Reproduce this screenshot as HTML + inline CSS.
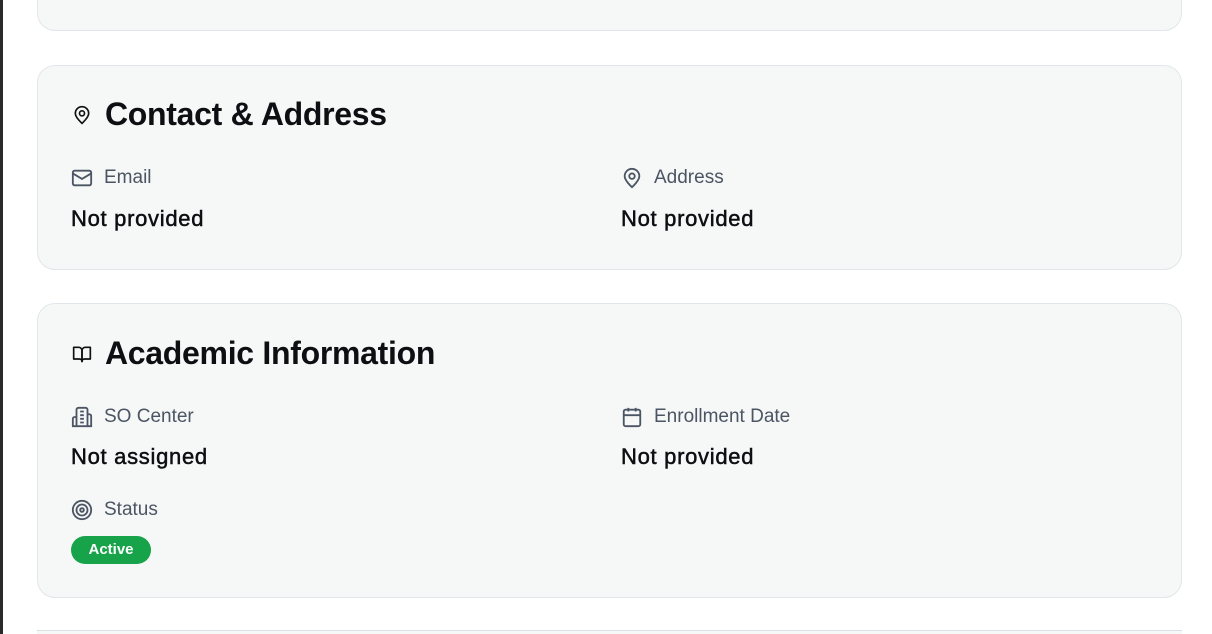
<!DOCTYPE html>
<html><head><style>
*{margin:0;padding:0;box-sizing:border-box}
body{width:1212px;height:634px;background:#fff;font-family:"Liberation Sans",sans-serif;position:relative;overflow:hidden}
.lb{position:absolute;left:0;top:0;width:3px;height:634px;background:#2a2a2a}
.card{position:absolute;left:37px;width:1145px;background:#f6f7f7;border:1px solid #e1e6ea;border-radius:18px}
.t{position:absolute;left:67px;font-size:32px;font-weight:bold;color:#0d0f12;letter-spacing:-0.3px;display:flex;align-items:center}
.t svg{margin-right:13px}
.l{position:absolute;font-size:19px;color:#4b5563;display:flex;align-items:center}
.l svg{margin-right:11px}
.v{position:absolute;font-size:22px;color:#0d0f12;letter-spacing:0.7px;-webkit-text-stroke:0.5px #0d0f12}
.badge{position:absolute;left:71px;top:536px;width:80px;height:28px;border-radius:14px;background:#16a34a;color:#fff;font-weight:bold;font-size:15px;text-align:center;line-height:28px}
</style></head><body>
<div class="lb"></div>
<div class="card" style="top:-20px;height:51px"></div>
<div class="card" style="top:65px;height:205px"></div>
<div class="card" style="top:303px;height:295px"></div>
<div style="position:absolute;left:37px;top:630px;width:1145px;height:4px;border-top:1px solid #d8e0e4;background:#f6f7f7"></div>

<div class="t" style="top:96px;left:72px"><svg width="20" height="20" viewBox="0 0 24 24" fill="none" stroke="#111" stroke-width="2" stroke-linecap="round"><path d="M20 10c0 5-8 12-8 12s-8-7-8-12a8 8 0 0 1 16 0z"/><circle cx="12" cy="10" r="3"/></svg>Contact &amp; Address</div>
<div class="l" style="left:71px;top:167px"><svg width="22" height="22" viewBox="0 0 24 24" fill="none" stroke="#4b5563" stroke-width="2"><rect x="2" y="4" width="20" height="16" rx="2"/><path d="M22 7l-10 6L2 7"/></svg>Email</div>
<div class="v" style="left:71px;top:206px">Not provided</div>
<div class="l" style="left:621px;top:167px"><svg width="22" height="22" viewBox="0 0 24 24" fill="none" stroke="#4b5563" stroke-width="2"><path d="M20 10c0 5-8 12-8 12s-8-7-8-12a8 8 0 0 1 16 0z"/><circle cx="12" cy="10" r="3"/></svg>Address</div>
<div class="v" style="left:621px;top:206px">Not provided</div>

<div class="t" style="top:335px;left:72px"><svg width="20" height="20" viewBox="0 0 24 24" fill="none" stroke="#111" stroke-width="2" stroke-linejoin="round"><path d="M2 4h6a4 4 0 0 1 4 4v13a3 3 0 0 0-3-3H2z"/><path d="M22 4h-6a4 4 0 0 0-4 4v13a3 3 0 0 1 3-3h7z"/></svg>Academic Information</div>
<div class="l" style="left:71px;top:406px"><svg width="22" height="22" viewBox="0 0 24 24" fill="none" stroke="#4b5563" stroke-width="2"><path d="M6 22V4a2 2 0 0 1 2-2h8a2 2 0 0 1 2 2v18z"/><path d="M6 12H4a2 2 0 0 0-2 2v8h4M18 9h2a2 2 0 0 1 2 2v11h-4M10 6h4M10 10h4M10 14h4M10 18h4"/></svg>SO Center</div>
<div class="v" style="left:71px;top:444px">Not assigned</div>
<div class="l" style="left:621px;top:406px"><svg width="22" height="22" viewBox="0 0 24 24" fill="none" stroke="#4b5563" stroke-width="2"><rect x="3" y="4" width="18" height="18" rx="2"/><path d="M16 2v4M8 2v4M3 10h18"/></svg>Enrollment Date</div>
<div class="v" style="left:621px;top:444px">Not provided</div>
<div class="l" style="left:71px;top:499px"><svg width="22" height="22" viewBox="0 0 24 24" fill="none" stroke="#4b5563" stroke-width="2"><circle cx="12" cy="12" r="10"/><circle cx="12" cy="12" r="6"/><circle cx="12" cy="12" r="2"/></svg>Status</div>
<div class="badge">Active</div>
</body></html>
